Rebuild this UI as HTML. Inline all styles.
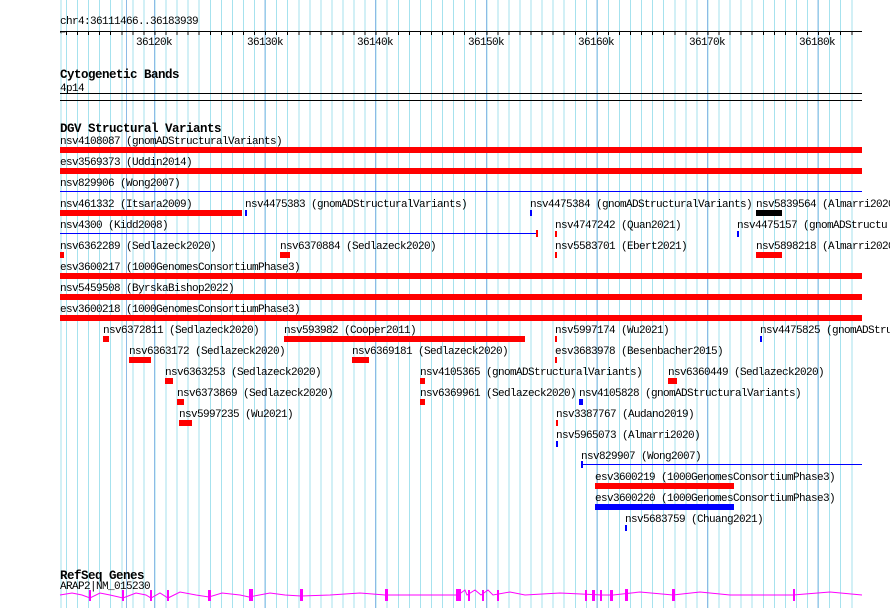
<!DOCTYPE html>
<html><head><meta charset="utf-8">
<style>
body{margin:0;background:#fff;}
#c{position:relative;width:890px;height:608px;overflow:hidden;font-family:"Liberation Mono","DejaVu Sans Mono",monospace;font-size:11px;color:#000;}
.g{position:absolute;top:0;left:60px;width:802px;height:608px;
background-image:repeating-linear-gradient(to right,#8cbbe6 0 1px,transparent 1px 110.6px),repeating-linear-gradient(to right,#a6e2ee 0 1px,transparent 1px 11.06px);
background-position:94px 0,6px 0;}
.t{position:absolute;white-space:pre;line-height:11px;letter-spacing:-0.6px;margin-top:1px;}
.h{position:absolute;white-space:pre;font-weight:bold;font-size:12.5px;letter-spacing:-0.5px;line-height:12px;margin-top:1px;}
.r{position:absolute;background:#f00;height:6px;}
.b{position:absolute;background:#00f;height:6px;}
.l{position:absolute;background:#00f;height:1px;}
</style></head><body><div id="c">
<div class="g"></div>
<div class="t" style="left:60px;top:16px">chr4:36111466..36183939</div>
<div style="position:absolute;left:60px;top:31px;width:802px;height:1px;background:#000"></div>
<div style="position:absolute;left:66px;top:31px;width:796px;height:4px;background-image:repeating-linear-gradient(to right,#000 0 1px,transparent 1px 11.06px);"></div>
<div class="t" style="left:60px;top:26px;font-size:9px">&#8592;</div>
<div class="t" style="left:136px;top:37px">36120k</div>
<div class="t" style="left:247px;top:37px">36130k</div>
<div class="t" style="left:357px;top:37px">36140k</div>
<div class="t" style="left:468px;top:37px">36150k</div>
<div class="t" style="left:578px;top:37px">36160k</div>
<div class="t" style="left:689px;top:37px">36170k</div>
<div class="t" style="left:799px;top:37px">36180k</div>

<div class="h" style="left:60px;top:68px">Cytogenetic Bands</div>
<div class="t" style="left:60px;top:83px">4p14</div>
<div style="position:absolute;left:60px;top:93px;width:802px;height:1px;background:#000"></div>
<div style="position:absolute;left:60px;top:100px;width:802px;height:1px;background:#000"></div>

<div class="h" style="left:60px;top:122px">DGV Structural Variants</div>

<div class="t" style="left:60px;top:136px">nsv4108087 (gnomADStructuralVariants)</div>
<div class="r" style="left:60px;top:147px;width:802px"></div>
<div class="t" style="left:60px;top:157px">esv3569373 (Uddin2014)</div>
<div class="r" style="left:60px;top:168px;width:802px"></div>
<div class="t" style="left:60px;top:178px">nsv829906 (Wong2007)</div>
<div class="l" style="left:60px;top:191px;width:802px"></div>

<div class="t" style="left:60px;top:199px">nsv461332 (Itsara2009)</div>
<div class="r" style="left:60px;top:210px;width:182px"></div>
<div class="t" style="left:245px;top:199px">nsv4475383 (gnomADStructuralVariants)</div>
<div class="b" style="left:245px;top:210px;width:2px"></div>
<div class="t" style="left:530px;top:199px">nsv4475384 (gnomADStructuralVariants)</div>
<div class="b" style="left:530px;top:210px;width:2px"></div>
<div class="t" style="left:756px;top:199px">nsv5839564 (Almarri2020</div>
<div style="position:absolute;left:756px;top:210px;width:26px;height:6px;background:#000"></div>

<div class="t" style="left:60px;top:220px">nsv4300 (Kidd2008)</div>
<div class="l" style="left:60px;top:233px;width:477px"></div>
<div style="position:absolute;left:536px;top:230px;width:2px;height:7px;background:#f00"></div>
<div class="t" style="left:555px;top:220px">nsv4747242 (Quan2021)</div>
<div class="r" style="left:555px;top:231px;width:2px"></div>
<div class="t" style="left:737px;top:220px">nsv4475157 (gnomADStructu</div>
<div class="b" style="left:737px;top:231px;width:2px"></div>

<div class="t" style="left:60px;top:241px">nsv6362289 (Sedlazeck2020)</div>
<div class="r" style="left:60px;top:252px;width:4px"></div>
<div class="t" style="left:280px;top:241px">nsv6370884 (Sedlazeck2020)</div>
<div class="r" style="left:280px;top:252px;width:10px"></div>
<div class="t" style="left:555px;top:241px">nsv5583701 (Ebert2021)</div>
<div class="r" style="left:555px;top:252px;width:2px"></div>
<div class="t" style="left:756px;top:241px">nsv5898218 (Almarri2020</div>
<div class="r" style="left:756px;top:252px;width:26px"></div>

<div class="t" style="left:60px;top:262px">esv3600217 (1000GenomesConsortiumPhase3)</div>
<div class="r" style="left:60px;top:273px;width:802px"></div>
<div class="t" style="left:60px;top:283px">nsv5459508 (ByrskaBishop2022)</div>
<div class="r" style="left:60px;top:294px;width:802px"></div>
<div class="t" style="left:60px;top:304px">esv3600218 (1000GenomesConsortiumPhase3)</div>
<div class="r" style="left:60px;top:315px;width:802px"></div>

<div class="t" style="left:103px;top:325px">nsv6372811 (Sedlazeck2020)</div>
<div class="r" style="left:103px;top:336px;width:6px"></div>
<div class="t" style="left:284px;top:325px">nsv593982 (Cooper2011)</div>
<div class="r" style="left:284px;top:336px;width:241px"></div>
<div class="t" style="left:555px;top:325px">nsv5997174 (Wu2021)</div>
<div class="r" style="left:555px;top:336px;width:2px"></div>
<div class="t" style="left:760px;top:325px">nsv4475825 (gnomADStru</div>
<div class="b" style="left:760px;top:336px;width:2px"></div>

<div class="t" style="left:129px;top:346px">nsv6363172 (Sedlazeck2020)</div>
<div class="r" style="left:129px;top:357px;width:22px"></div>
<div class="t" style="left:352px;top:346px">nsv6369181 (Sedlazeck2020)</div>
<div class="r" style="left:352px;top:357px;width:17px"></div>
<div class="t" style="left:555px;top:346px">esv3683978 (Besenbacher2015)</div>
<div class="r" style="left:555px;top:357px;width:2px"></div>

<div class="t" style="left:165px;top:367px">nsv6363253 (Sedlazeck2020)</div>
<div class="r" style="left:165px;top:378px;width:8px"></div>
<div class="t" style="left:420px;top:367px">nsv4105365 (gnomADStructuralVariants)</div>
<div class="r" style="left:420px;top:378px;width:5px"></div>
<div class="t" style="left:668px;top:367px">nsv6360449 (Sedlazeck2020)</div>
<div class="r" style="left:668px;top:378px;width:9px"></div>

<div class="t" style="left:177px;top:388px">nsv6373869 (Sedlazeck2020)</div>
<div class="r" style="left:177px;top:399px;width:7px"></div>
<div class="t" style="left:420px;top:388px">nsv6369961 (Sedlazeck2020)</div>
<div class="r" style="left:420px;top:399px;width:5px"></div>
<div class="t" style="left:579px;top:388px">nsv4105828 (gnomADStructuralVariants)</div>
<div class="b" style="left:579px;top:399px;width:4px"></div>

<div class="t" style="left:179px;top:409px">nsv5997235 (Wu2021)</div>
<div class="r" style="left:179px;top:420px;width:13px"></div>
<div class="t" style="left:556px;top:409px">nsv3387767 (Audano2019)</div>
<div class="r" style="left:556px;top:420px;width:2px"></div>

<div class="t" style="left:556px;top:430px">nsv5965073 (Almarri2020)</div>
<div class="b" style="left:556px;top:441px;width:2px"></div>

<div class="t" style="left:581px;top:451px">nsv829907 (Wong2007)</div>
<div class="l" style="left:581px;top:464px;width:281px"></div>
<div style="position:absolute;left:581px;top:461px;width:2px;height:7px;background:#00f"></div>

<div class="t" style="left:595px;top:472px">esv3600219 (1000GenomesConsortiumPhase3)</div>
<div class="r" style="left:595px;top:483px;width:139px"></div>
<div class="t" style="left:595px;top:493px">esv3600220 (1000GenomesConsortiumPhase3)</div>
<div class="b" style="left:595px;top:504px;width:139px"></div>
<div class="t" style="left:625px;top:514px">nsv5683759 (Chuang2021)</div>
<div class="b" style="left:625px;top:525px;width:2px"></div>

<div class="h" style="left:60px;top:569px">RefSeq Genes</div>
<div class="t" style="left:60px;top:581px">ARAP2|NM_015230</div>
<svg style="position:absolute;left:0;top:585px" width="890" height="23">
<polyline fill="none" stroke="#f0f" stroke-width="1" points="60,10 72,8 82,10 90,13 100,8 110,10 123,13 136,8 146,10 151,13 160,8 168,13 180,7 196,10 209,12 222,8 240,10 249,12 270,8 285,10 301,11 330,10 360,8 385,10 440,10 458,10 465,5 467,10 475,5 481,10 488,5 493,10 510,7 525,10 560,8 602,10 613,10 640,7 673,10 700,7 730,10 793,10 830,7 862,10"/>
<g fill="#f0f">
<rect x="89" y="5" width="2" height="11"/><rect x="122" y="5" width="2" height="11"/><rect x="150" y="5" width="2" height="11"/><rect x="167" y="5" width="2" height="11"/><rect x="208" y="5" width="3" height="11"/><rect x="249" y="4" width="4" height="12"/><rect x="300" y="4" width="3" height="12"/><rect x="385" y="4" width="3" height="12"/><rect x="456" y="4" width="5" height="12"/><rect x="468" y="5" width="2" height="11"/><rect x="482" y="5" width="2" height="11"/><rect x="497" y="5" width="2" height="11"/><rect x="585" y="5" width="2" height="11"/><rect x="592" y="5" width="3" height="11"/><rect x="600" y="5" width="2" height="11"/><rect x="610" y="5" width="3" height="11"/><rect x="625" y="4" width="3" height="12"/><rect x="672" y="4" width="3" height="12"/><rect x="793" y="4" width="2" height="12"/>
</g>
</svg>
</div></body></html>
